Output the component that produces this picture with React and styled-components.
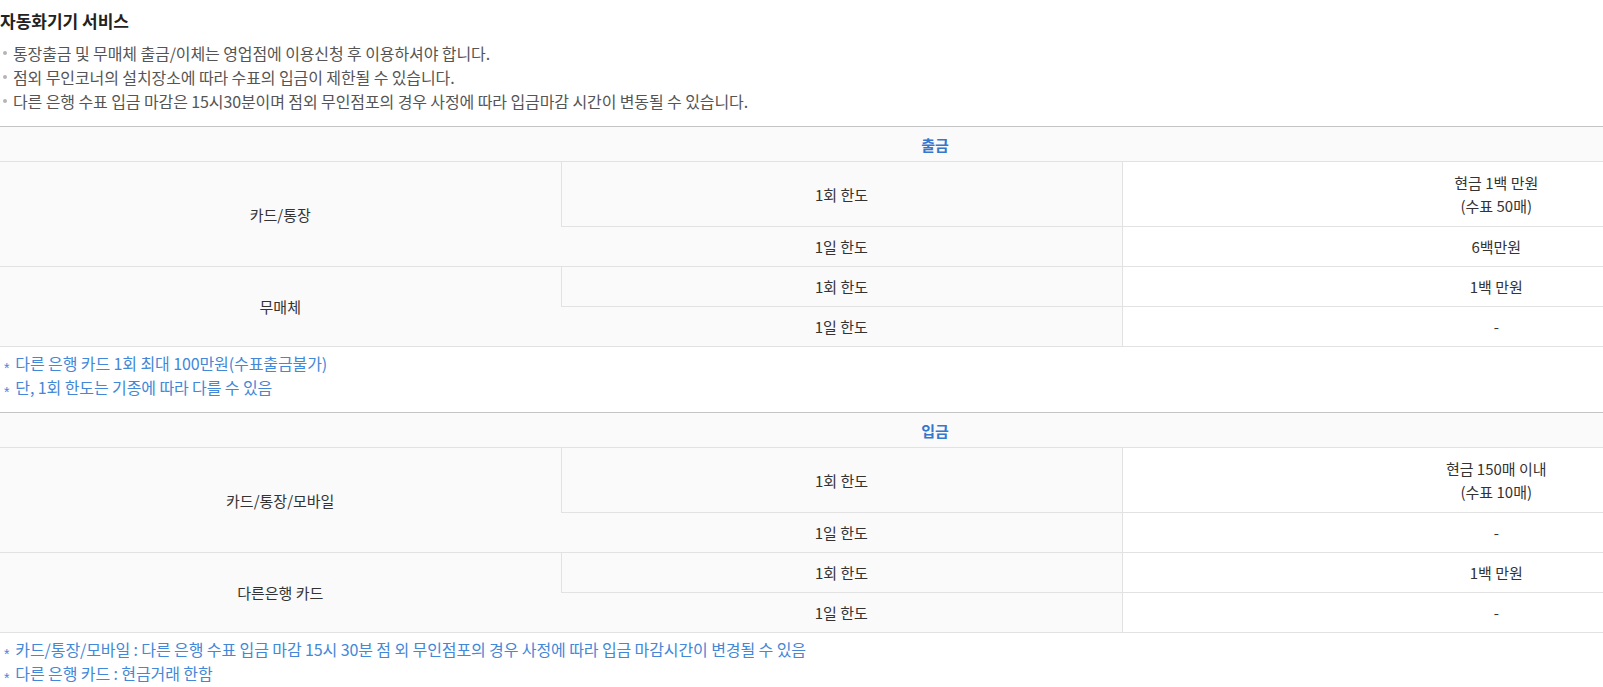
import React from 'react';
import styled, { createGlobalStyle } from 'styled-components';

const Global = createGlobalStyle`
  html, body { margin: 0; padding: 0; overflow: hidden; background: #fff; }
  body { font-family: "Noto Sans CJK KR", "Noto Sans", sans-serif; color: #333; }
`;

const Page = styled.div`
  padding-top: 9px;
`;

const Title = styled.h3`
  margin: 0;
  font-size: 17px;
  line-height: 23px;
  font-weight: 700;
  color: #222;
`;

const BulletList = styled.ul`
  list-style: none;
  margin: 9px 0 0;
  padding: 0;
`;

const Bullet = styled.li`
  position: relative;
  padding-left: 13px;
  font-size: 16px;
  line-height: 24px;
  letter-spacing: -0.1px;
  color: #555;
  &::before {
    content: '';
    position: absolute;
    left: 3px;
    top: 10px;
    width: 4px;
    height: 4px;
    border-radius: 50%;
    background: #b5b5b5;
  }
`;

const Table = styled.table`
  width: 1870px;
  margin-top: ${(p) => p.$gap}px;
  border-collapse: collapse;
  table-layout: fixed;
  border-top: 1px solid #c4c4c4;
  font-size: 15px;
  line-height: 23px;
  color: #333;
  text-align: center;
`;

const HeadCell = styled.th`
  padding: 6px 0 5px;
  background: #fafafa;
  color: #3577cc;
  font-weight: 700;
  border-bottom: 1px solid #e2e2e2;
`;

const Row = styled.tr`
  border-bottom: 1px solid #e2e2e2;
`;

const GroupCell = styled.td`
  padding: 8px 10px;
  background: #fafafa;
  vertical-align: middle;
`;

const LimitCell = styled.td`
  padding: 8px 10px;
  background: #fafafa;
  border-left: ${(p) => (p.$first ? '1px solid #e2e2e2' : 'none')};
  border-bottom: 1px solid #e2e2e2;
`;

const ValueCell = styled.td`
  padding: ${(p) => (p.$tall ? '9px' : '8px')} 10px;
  background: #fff;
  border-left: 1px solid #e2e2e2;
  border-bottom: 1px solid #e2e2e2;
`;

const Line = styled.div`
  line-height: 23px;
`;

const Notes = styled.ul`
  list-style: none;
  margin: 4px 0 0;
  padding: 0;
`;

const Note = styled.li`
  font-size: 16px;
  line-height: 24px;
  letter-spacing: -0.1px;
  color: #4287d8;
  padding-left: 4px;
`;

const Star = styled.span`
  display: inline-block;
  font-family: "Liberation Sans", sans-serif;
  font-size: 14px;
  line-height: 1;
  transform: translateY(3px);
  margin-right: 6px;
`;

const sections = [
  {
    title: '출금',
    groups: [
      {
        label: '카드/통장',
        rows: [
          { k: '1회 한도', v: ['현금 1백 만원', '(수표 50매)'] },
          { k: '1일 한도', v: ['6백만원'] },
        ],
      },
      {
        label: '무매체',
        rows: [
          { k: '1회 한도', v: ['1백 만원'] },
          { k: '1일 한도', v: ['-'] },
        ],
      },
    ],
    notes: ['다른 은행 카드 1회 최대 100만원(수표출금불가)', '단, 1회 한도는 기종에 따라 다를 수 있음'],
  },
  {
    title: '입금',
    groups: [
      {
        label: '카드/통장/모바일',
        rows: [
          { k: '1회 한도', v: ['현금 150매 이내', '(수표 10매)'] },
          { k: '1일 한도', v: ['-'] },
        ],
      },
      {
        label: '다른은행 카드',
        rows: [
          { k: '1회 한도', v: ['1백 만원'] },
          { k: '1일 한도', v: ['-'] },
        ],
      },
    ],
    notes: [
      '카드/통장/모바일 : 다른 은행 수표 입금 마감 15시 30분 점 외 무인점포의 경우 사정에 따라 입금 마감시간이 변경될 수 있음',
      '다른 은행 카드 : 현금거래 한함',
    ],
  },
];

const bullets = [
  '통장출금 및 무매체 출금/이체는 영업점에 이용신청 후 이용하셔야 합니다.',
  '점외 무인코너의 설치장소에 따라 수표의 입금이 제한될 수 있습니다.',
  '다른 은행 수표 입금 마감은 15시30분이며 점외 무인점포의 경우 사정에 따라 입금마감 시간이 변동될 수 있습니다.',
];

function Section({ data, gap }) {
  return (
    <>
      <Table $gap={gap}>
        <colgroup>
          <col style={{ width: '30%' }} />
          <col style={{ width: '30%' }} />
          <col style={{ width: '40%' }} />
        </colgroup>
        <thead>
          <tr>
            <HeadCell colSpan={3}>{data.title}</HeadCell>
          </tr>
        </thead>
        <tbody>
          {data.groups.map((g) =>
            g.rows.map((r, i) => (
              <Row key={g.label + i}>
                {i === 0 && <GroupCell rowSpan={g.rows.length}>{g.label}</GroupCell>}
                <LimitCell $first={i === 0}>{r.k}</LimitCell>
                <ValueCell $tall={r.v.length > 1}>
                  {r.v.map((l) => (
                    <Line key={l}>{l}</Line>
                  ))}
                </ValueCell>
              </Row>
            ))
          )}
        </tbody>
      </Table>
      <Notes>
        {data.notes.map((n) => (
          <Note key={n}>
            <Star>*</Star>
            {n}
          </Note>
        ))}
      </Notes>
    </>
  );
}

export default function App() {
  return (
    <Page>
      <Global />
      <Title>자동화기기 서비스</Title>
      <BulletList>
        {bullets.map((b) => (
          <Bullet key={b}>{b}</Bullet>
        ))}
      </BulletList>
      <Section data={sections[0]} gap={13} />
      <Section data={sections[1]} gap={13} />
    </Page>
  );
}
